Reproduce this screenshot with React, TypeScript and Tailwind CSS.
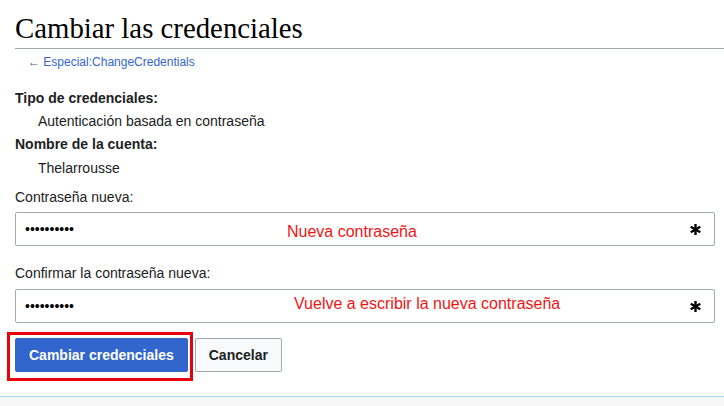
import React from 'react';

const HeavyAsterisk: React.FC = () => (
  <svg width="11" height="11" viewBox="0 0 12 12" className="text-[#000]">
    <g stroke="currentColor" strokeWidth="2.6" strokeLinecap="butt">
      <line x1="6" y1="0" x2="6" y2="12" />
      <line x1="0.8" y1="3" x2="11.2" y2="9" />
      <line x1="0.8" y1="9" x2="11.2" y2="3" />
    </g>
  </svg>
);

type FieldProps = {
  label: string;
  hint: string;
  hintPos: string;
  labelGap: string;
  inputGap: string;
};

const PasswordField: React.FC<FieldProps> = ({ label, hint, hintPos, labelGap, inputGap }) => (
  <div>
    <div className={`${labelGap} leading-[22px] text-[14px] text-[#202122]`}>{label}</div>
    <div
      className={`${inputGap} relative flex h-[34px] items-center justify-between rounded-[2px] border border-[#a2a9b1] bg-white pl-[9px] pr-[13px]`}
    >
      <span className="text-[14px] leading-none text-[#000]">••••••••••</span>
      <HeavyAsterisk />
      {/* annotation over the field */}
      <span className={`absolute ${hintPos} text-[16px] leading-none text-[#f21414]`}>{hint}</span>
    </div>
  </div>
);

const App: React.FC = () => {
  return (
    <div className="h-[406px] w-[724px] overflow-hidden bg-white font-['Liberation_Sans',Arial,sans-serif]">
      <div className="flex h-[396px] flex-col pl-[15px]">
        <h1 className="mt-[10px] border-b border-[#a2a9b1] pb-px font-['Liberation_Serif','Times_New_Roman',serif] text-[28.8px] font-normal leading-[37px] text-[#000]">
          Cambiar las credenciales
        </h1>

        <div className="mt-[5px] pl-[13px] text-[12px] leading-[16px]">
          <span className="text-[#54595d]">← </span>
          <a className="text-[#36c]">Especial:ChangeCredentials</a>
        </div>

        <div className="pr-[9px] text-[14px] text-[#202122]">
          <div className="mt-[17px] font-bold leading-[22px]">Tipo de credenciales:</div>
          <div className="mt-px pl-[23px] leading-[22px]">Autenticación basada en contraseña</div>
          <div className="mt-px font-bold leading-[22px]">Nombre de la cuenta:</div>
          <div className="mt-[2px] pl-[23px] leading-[22px]">Thelarrousse</div>

          <PasswordField
            label="Contraseña nueva:"
            hint="Nueva contraseña"
            hintPos="left-[271px] top-[11px]"
            labelGap="mt-[7px]"
            inputGap="mt-[4px]"
          />
          <PasswordField
            label="Confirmar la contraseña nueva:"
            hint="Vuelve a escribir la nueva contraseña"
            hintPos="left-[278px] top-[6px]"
            labelGap="mt-[16px]"
            inputGap="mt-[5px]"
          />

          <div className="mt-[15px] flex gap-[7px]">
            <div className="relative">
              <button className="flex h-[34px] items-center rounded-[2px] border border-[#36c] bg-[#36c] px-[13px] text-[14px] font-bold text-white">
                Cambiar credenciales
              </button>
              {/* red highlight box */}
              <div className="pointer-events-none absolute left-[-8px] top-[-6px] h-[49px] w-[186px] border-[3px] border-[#e8000b]" />
            </div>
            <button className="flex h-[34px] items-center rounded-[2px] border border-[#a2a9b1] bg-[#f8f9fa] px-[13px] text-[14px] font-bold text-[#202122]">
              Cancelar
            </button>
          </div>
        </div>
      </div>
      <div className="h-[10px] border-t border-[#a7d7f9] bg-[#f6f6f6]" />
    </div>
  );
};

export default App;
